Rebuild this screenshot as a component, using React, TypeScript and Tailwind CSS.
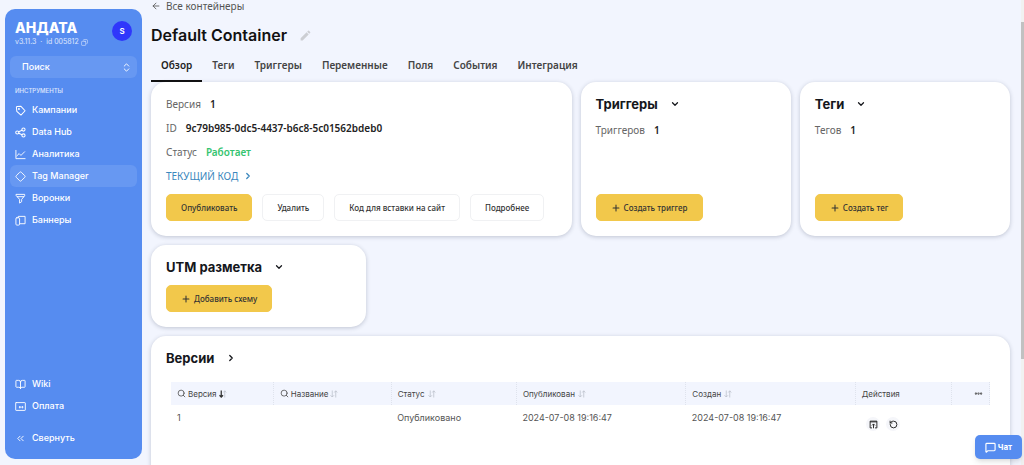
import React from "react";
import {
  ArrowLeft,
  BookOpen,
  ChevronDown,
  ChevronRight,
  ChevronsLeft,
  ChevronsUpDown,
  Copy,
  Diamond,
  Ellipsis,
  MessageSquare,
  Plus,
  RotateCcw,
  Search,
} from "lucide-react";
import { MdEdit } from "react-icons/md";

type IconProps = { className?: string };

const stroke = {
  viewBox: "0 0 24 24",
  fill: "none",
  stroke: "currentColor",
  strokeWidth: 2,
  strokeLinecap: "round" as const,
  strokeLinejoin: "round" as const,
  "aria-hidden": true,
};

const TagIcon = ({ className }: IconProps) => (
  <svg {...stroke} strokeWidth={2.2} className={className}>
    <path d="M3 5l1-1.500 9-.5 9 9.500-9 9.500-9-8z" />
    <circle cx="8.500" cy="8.500" r="1" fill="currentColor" />
  </svg>
);

const ShareIcon = ({ className }: IconProps) => (
  <svg {...stroke} strokeWidth={2.2} className={className}>
    <circle cx="5" cy="12" r="3.500" />
    <circle cx="18.500" cy="5.500" r="3.500" />
    <circle cx="18.500" cy="18.500" r="3.500" />
    <path d="M8.200 10.500l7-3.500M8.200 13.500l7 3.500" />
  </svg>
);

const ChartIcon = ({ className }: IconProps) => (
  <svg {...stroke} className={className}>
    <path d="M2 3v18h20" />
    <path d="M4 15l5-5 4 4 8-8" />
  </svg>
);

const FunnelIcon = ({ className }: IconProps) => (
  <svg {...stroke} className={className}>
    <path d="M3 3h18v3l-6.500 8v5L10 22v-8L3 6z" />
    <path d="M5 8h14" />
  </svg>
);

const BannerIcon = ({ className }: IconProps) => (
  <svg {...stroke} className={className}>
    <path d="M7 6V3h15v16H11" />
    <rect x="2" y="6" width="8" height="16" rx="2" />
  </svg>
);

const PaymentIcon = ({ className }: IconProps) => (
  <svg {...stroke} className={className}>
    <rect x="1.500" y="3.500" width="21" height="17" rx="1" />
    <path d="M10.500 12h1v3h-1zM16 12h1v3h-1z" />
  </svg>
);

const PublishIcon = ({ className }: IconProps) => (
  <svg {...stroke} strokeWidth={2.5} strokeLinecap="butt" className={className}>
    <path d="M8 21H3V3h18v18h-5" />
    <path d="M3 5h18M12 22V11M8 14.500l4-4 4 4" />
  </svg>
);

const SortIcon = ({ active = false }: { active?: boolean }) => (
  <svg viewBox="0 0 16 16" fill="none" strokeWidth="1.500" className="size-2 shrink-0" aria-hidden="true">
    <path d="M4.500 1v13M1 10.500L4.500 14 8 10.500" stroke={active ? "#333" : "#b9bdc8"} strokeWidth={active ? 2.5 : 1.5} />
    <path d="M11.500 15V2M8.500 5l3-3.500 3 3.500" stroke="#b9bdc8" />
  </svg>
);

const tools = [
  { label: "Кампании", Icon: TagIcon },
  { label: "Data Hub", Icon: ShareIcon },
  { label: "Аналитика", Icon: ChartIcon },
  { label: "Tag Manager", Icon: Diamond, active: true },
  { label: "Воронки", Icon: FunnelIcon },
  { label: "Баннеры", Icon: BannerIcon },
];

const tabs = ["Обзор", "Теги", "Триггеры", "Переменные", "Поля", "События", "Интеграция"];

function NavLink({
  label,
  Icon,
  active,
}: {
  label: string;
  Icon: React.ComponentType<IconProps>;
  active?: boolean;
}) {
  return (
    <a
      href="#"
      className={`flex h-[22px] items-center gap-[6px] rounded-md px-[5px] text-[9px] font-medium ${active ? "bg-white/10" : ""}`}
    >
      <Icon className="size-[11px] shrink-0" />
      {label}
    </a>
  );
}

function Sidebar() {
  return (
    <aside className="mt-[9px] mb-[6px] ml-[5px] flex w-[137px] shrink-0 flex-col rounded-[10px] bg-[#568cf0] px-[5px] pb-[10px] font-['Inter',sans-serif] text-white">
      <div className="flex items-start justify-between pt-3 pr-[5px] pl-[5px]">
        <div>
          <div className="text-[14px] leading-[14px] font-extrabold">АНДАТА</div>
          <div className="mt-[3px] flex items-center gap-[2px] text-[7px] leading-[8px] text-white/80">
            <span>v3.11.3&nbsp; · &nbsp;id 005812</span>
            <Copy className="size-[7px] -scale-x-100" />
          </div>
        </div>
        <div className="flex size-5 items-center justify-center rounded-full bg-[#2f37fb] text-[8px] font-semibold">S</div>
      </div>
      <button type="button" className="mt-[10px] flex h-[22px] shrink-0 items-center justify-between rounded-md bg-white/10 pr-[5px] pl-3 text-[9px] font-medium">
        Поиск
        <ChevronsUpDown className="size-[11px]" />
      </button>
      <div className="mt-[9px] mb-1 pl-[5px] text-[6px] leading-[8px] font-medium text-white/80">ИНСТРУМЕНТЫ</div>
      <nav className="flex grow flex-col">
        {tools.map((t) => (
          <NavLink key={t.label} {...t} />
        ))}
        <div className="mt-auto">
          <NavLink label="Wiki" Icon={BookOpen} />
          <NavLink label="Оплата" Icon={PaymentIcon} />
        </div>
      </nav>
      <button type="button" className="mt-[10px] flex h-[22px] items-center gap-[6px] px-[5px] text-[9px] font-medium">
        <ChevronsLeft className="size-[11px]" />
        Свернуть
      </button>
    </aside>
  );
}

function Card({ className = "", children }: { className?: string; children: React.ReactNode }) {
  return (
    <section className={`rounded-[15px] bg-white px-[15px] shadow-[0_1px_4px_rgba(40,50,80,0.25)] ${className}`}>{children}</section>
  );
}

function CardTitle({ children, right = false }: { children: React.ReactNode; right?: boolean }) {
  const Icon = right ? ChevronRight : ChevronDown;
  return (
    <h2 className="flex items-center gap-3 font-['Inter',sans-serif] text-[13px] leading-4 font-bold text-[#15171c]">
      {children}
      <Icon className="size-[10px]" strokeWidth={3} />
    </h2>
  );
}

function Field({ label, value, tone = "text-[#222]" }: { label: string; value: string; tone?: string }) {
  return (
    <div className="flex gap-[9px] text-[10px] leading-3 text-[#666]">
      <span>{label}</span>
      <span className={`font-semibold ${tone}`}>{value}</span>
    </div>
  );
}

function Button({ children, primary = false, plus = false }: { children: React.ReactNode; primary?: boolean; plus?: boolean }) {
  return (
    <button
      type="button"
      className={`flex h-[27px] items-center gap-[3px] rounded-[5px] border px-[14px] text-[8px] font-medium text-[#333] ${
        primary ? "border-[#f2c84b] bg-[#f2c84b]" : "border-[#f0f1f3] bg-white"
      }`}
    >
      {plus && <Plus className="size-[10px]" strokeWidth={2.5} />}
      {children}
    </button>
  );
}

function Versions() {
  const th = "h-[23px] border-r border-dotted border-[#dfe3ed] px-[6px] text-left font-normal";
  const td = "px-[6px] pt-[7px] align-top";
  return (
    <table className="mt-4 ml-[5px] w-[calc(100%-10px)] table-fixed border-collapse font-['Inter',sans-serif] text-[9px] leading-3 text-[#555]">
      <colgroup>
        <col className="w-[12.5%]" />
        <col className="w-[14.4%]" />
        <col className="w-[15.3%]" />
        <col className="w-[20.7%]" />
        <col className="w-[20.7%]" />
        <col className="w-[11.8%]" />
        <col />
      </colgroup>
      <thead className="bg-[#f2f5fe] text-[8px] text-[#444]">
        <tr>
          <th className={th}>
            <span className="flex items-center gap-[2px]"><Search className="size-[9px]" />Версия <SortIcon active /></span>
          </th>
          <th className={th}>
            <span className="flex items-center gap-[2px]"><Search className="size-[9px]" />Название <SortIcon /></span>
          </th>
          <th className={th}>
            <span className="flex items-center gap-[3px]">Статус <SortIcon /></span>
          </th>
          <th className={th}>
            <span className="flex items-center gap-[3px]">Опубликован <SortIcon /></span>
          </th>
          <th className={th}>
            <span className="flex items-center gap-[3px]">Создан <SortIcon /></span>
          </th>
          <th className={th}>Действия</th>
          <th className={th}>
            <button type="button" aria-label="Ещё" className="ml-auto block">
              <Ellipsis className="size-[9px]" strokeWidth={4} />
            </button>
          </th>
        </tr>
      </thead>
      <tbody>
        <tr>
          <td className={td}>1</td>
          <td className={td} />
          <td className={td}>Опубликовано</td>
          <td className={td}>2024-07-08 19:16:47</td>
          <td className={td}>2024-07-08 19:16:47</td>
          <td className={td}>
            <div className="flex gap-[6px] pt-[5px] pl-[5px] text-[#222]">
              <button type="button" aria-label="Опубликовать версию" className="flex size-[14px] items-center justify-center rounded-full bg-[#f5f6fa]">
                <PublishIcon className="size-[9px]" />
              </button>
              <button type="button" aria-label="Восстановить версию" className="flex size-[14px] items-center justify-center rounded-full bg-[#f5f6fa]">
                <RotateCcw className="size-[9px]" strokeWidth={2.5} />
              </button>
            </div>
          </td>
          <td className={td} />
        </tr>
      </tbody>
    </table>
  );
}

export default function App() {
  return (
    <div className="relative flex h-screen overflow-hidden bg-[#f2f5fe] font-['Noto_Sans',sans-serif]">
      <Sidebar />
      <main className="flex min-w-0 grow flex-col pr-[11px] pl-[9px]">
        <a href="#" className="flex items-center gap-[5px] text-[10px] leading-3 text-[#555]">
          <ArrowLeft className="size-[10px]" />
          Все контейнеры
        </a>
        <div className="mt-[13px] flex items-center gap-3">
          <h1 className="font-['Inter',sans-serif] text-[16px] leading-5 font-semibold text-[#111]">Default Container</h1>
          <button type="button" aria-label="Переименовать" className="text-[#ccced3]">
            <MdEdit className="size-[13px]" />
          </button>
        </div>
        <nav className="mt-[6px] flex text-[10px] font-semibold text-[#444]">
          {tabs.map((t, i) => (
            <a
              key={t}
              href="#"
              className={`flex h-[31px] items-center border-b-2 px-[10px] ${i === 0 ? "border-[#111] text-[#222]" : "border-transparent"}`}
            >
              {t}
            </a>
          ))}
        </nav>
        <div className="grid grid-cols-[2fr_1fr_1fr] gap-[9px]">
          <Card className="pt-4 pb-[15px]">
            <div className="flex flex-col gap-3">
              <Field label="Версия" value="1" />
              <Field label="ID" value="9c79b985-0dc5-4437-b6c8-5c01562bdeb0" />
              <Field label="Статус" value="Работает" tone="text-[#35c46f]" />
              <a href="#" className="flex items-center gap-[5px] text-[10px] leading-3 text-[#3b87bd]">
                ТЕКУЩИЙ КОД
                <ChevronRight className="size-[10px]" strokeWidth={3} />
              </a>
            </div>
            <div className="mt-3 flex gap-[10px]">
              <Button primary>Опубликовать</Button>
              <Button>Удалить</Button>
              <Button>Код для вставки на сайт</Button>
              <Button>Подробнее</Button>
            </div>
          </Card>
          <Card className="flex flex-col items-start pt-[14px] pb-[15px]">
            <CardTitle>Триггеры</CardTitle>
            <div className="mt-3"><Field label="Триггеров" value="1" /></div>
            <div className="mt-auto"><Button primary plus>Создать триггер</Button></div>
          </Card>
          <Card className="flex flex-col items-start pt-[14px] pb-[15px]">
            <CardTitle>Теги</CardTitle>
            <div className="mt-3"><Field label="Тегов" value="1" /></div>
            <div className="mt-auto"><Button primary plus>Создать тег</Button></div>
          </Card>
        </div>
        <Card className="mt-[9px] w-1/4 shrink-0 pt-[14px] pb-[15px]">
          <CardTitle>UTM разметка</CardTitle>
          <div className="mt-[10px] flex"><Button primary plus>Добавить схему</Button></div>
        </Card>
        <Card className="mt-[9px] -mb-5 grow pt-[14px]">
          <CardTitle right>Версии</CardTitle>
          <Versions />
        </Card>
      </main>
      <div aria-hidden="true" className="flex w-[3px] shrink-0 flex-col bg-[#f1f1f1] pt-[22px]">
        <div className="h-[76%] bg-[#c1c1c1]" />
      </div>
      <button
        type="button"
        className="absolute right-[2px] bottom-[6px] flex h-6 w-[47px] items-center justify-center gap-[2px] rounded-[5px] bg-[#568cf0] font-['Inter',sans-serif] text-[8px] font-bold text-white shadow-md"
      >
        <MessageSquare className="size-[11px]" strokeWidth={2.5} />
        Чат
      </button>
    </div>
  );
}
